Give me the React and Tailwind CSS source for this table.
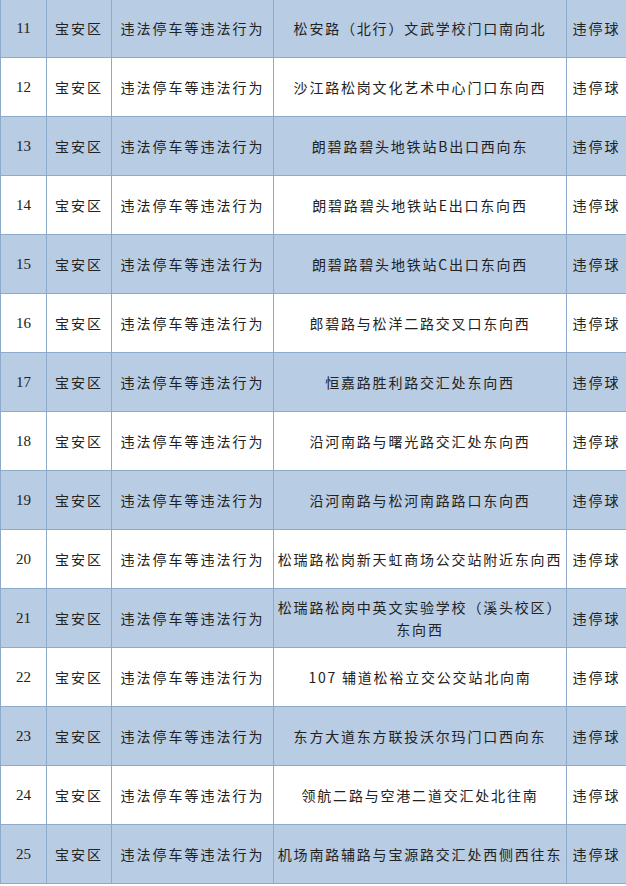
import React from "react";

const rows = [
  { no: 11, place: "松安路（北行）文武学校门口南向北" },
  { no: 12, place: "沙江路松岗文化艺术中心门口东向西" },
  { no: 13, place: "朗碧路碧头地铁站B出口西向东" },
  { no: 14, place: "朗碧路碧头地铁站E出口东向西" },
  { no: 15, place: "朗碧路碧头地铁站C出口东向西" },
  { no: 16, place: "郎碧路与松洋二路交叉口东向西" },
  { no: 17, place: "恒嘉路胜利路交汇处东向西" },
  { no: 18, place: "沿河南路与曙光路交汇处东向西" },
  { no: 19, place: "沿河南路与松河南路路口东向西" },
  { no: 20, place: "松瑞路松岗新天虹商场公交站附近东向西" },
  { no: 21, place: ["松瑞路松岗中英文实验学校（溪头校区）", "东向西"] },
  { no: 22, place: "107 辅道松裕立交公交站北向南" },
  { no: 23, place: "东方大道东方联投沃尔玛门口西向东" },
  { no: 24, place: "领航二路与空港二道交汇处北往南" },
  { no: 25, place: "机场南路辅路与宝源路交汇处西侧西往东" },
];

const cell = "flex items-center justify-center border-r border-[#8eaacb]";

function Row({ row, index }) {
  const shaded = index % 2 === 0;
  return (
    <div
      className={
        "grid h-[59px] grid-cols-[46px_65px_162px_293px_1fr] border-b border-[#8eaacb] text-[#222] text-[14px] font-['Noto_Sans_CJK_SC','Noto_Sans',sans-serif] " +
        (shaded ? "bg-[#b8cce4]" : "bg-white")
      }
    >
      <div className={cell + " text-[15px] font-['Liberation_Serif',serif]"}>{row.no}</div>
      <div className={cell + " tracking-[2px]"}>宝安区</div>
      <div className={cell + " tracking-[2px]"}>违法停车等违法行为</div>
      <div className={cell + " flex-col leading-[22px] tracking-[1.8px] whitespace-nowrap"}>
        {Array.isArray(row.place) ? row.place.map((l) => <span key={l}>{l}</span>) : <span>{row.place}</span>}
      </div>
      <div className="flex items-center justify-center tracking-[2px]">违停球</div>
    </div>
  );
}

export default function App() {
  return (
    <div className="h-[886px] w-[626px] overflow-hidden bg-white">
      <div className="-mt-px border-l border-[#8eaacb]">
        {rows.map((row, i) => (
          <Row key={row.no} row={row} index={i} />
        ))}
      </div>
    </div>
  );
}
